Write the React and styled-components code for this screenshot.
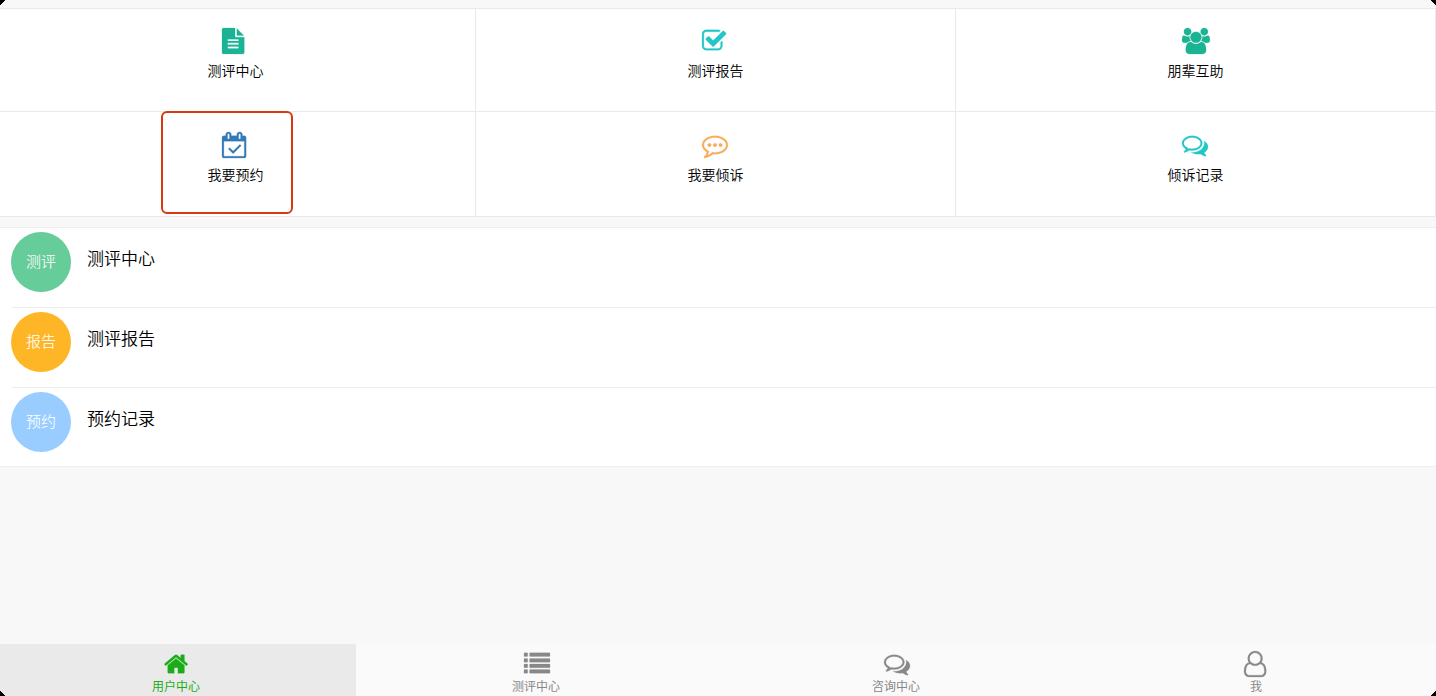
import React from "react";
import styled, { createGlobalStyle, css } from "styled-components";

const GlobalStyle = createGlobalStyle`
  body {
    margin: 0;
    background: #f8f8f8;
    color: #000;
    font-family: "Noto Sans CJK SC", sans-serif;
    font-weight: 350;
  }
  a {
    color: inherit;
    text-decoration: none;
  }
`;

const Page = styled.div`
  min-height: 100vh;
  margin-left: -4px;
  box-sizing: border-box;
  padding-top: 8px;
  display: flex;
  flex-direction: column;
`;

const Grid = styled.nav`
  position: relative;
  display: grid;
  grid-template-columns: repeat(3, 1fr);
  background: #fff;
  border-bottom: 1px solid #e9e9e9;
  &::before {
    content: "";
    position: absolute;
    top: 0;
    left: 0;
    right: 0;
    border-top: 1px solid #e9e9e9;
  }
`;

const GridCell = styled.a`
  position: relative;
  box-sizing: border-box;
  min-height: 104px;
  padding-top: 20px;
  display: flex;
  flex-direction: column;
  align-items: center;
  border-right: 1px solid #e9e9e9;
  &:nth-child(-n + 3) {
    border-bottom: 1px solid #e9e9e9;
  }
`;

const IconBox = styled.span`
  width: ${props => props.$width}px;
  height: 26px;
  color: ${props => props.$color};
  svg {
    display: block;
    height: 26px;
    overflow: visible;
    fill: currentColor;
    stroke: currentColor;
    stroke-width: 16px;
  }
`;

const GridLabel = styled.span`
  margin-top: 6px;
  font-size: 14px;
  line-height: 20px;
`;

const Highlight = styled.span`
  position: absolute;
  top: -1px;
  left: 165px;
  width: 132px;
  height: 103px;
  box-sizing: border-box;
  border: 2px solid #d9380f;
  border-radius: 6px;
`;

const List = styled.div`
  margin-top: 10px;
  background: #fff;
  border-top: 1px solid #efefef;
  border-bottom: 1px solid #efefef;
`;

const ListRow = styled.a`
  position: relative;
  display: flex;
  align-items: flex-start;
  gap: 16px;
  padding: 4px 15px 14px;
  & + & {
    padding-top: 6px;
    &::before {
      content: "";
      position: absolute;
      top: 1px;
      left: 16px;
      right: 0;
      border-top: 1px solid #efefef;
    }
  }
`;

const Badge = styled.span`
  width: 60px;
  height: 60px;
  border-radius: 50%;
  background: ${props => props.$color};
  color: rgba(255, 255, 255, 0.9);
  font-size: 15px;
  line-height: 58px;
  text-align: center;
`;

const ListTitle = styled.span`
  margin-top: 14px;
  font-size: 17px;
  line-height: 24px;
`;

const TabBar = styled.nav`
  margin-top: auto;
  display: grid;
  grid-template-columns: repeat(4, 1fr);
  background: #fafafa;
`;

const Tab = styled.a`
  padding: 7px 0 1px;
  display: flex;
  flex-direction: column;
  align-items: center;
  font-size: 12px;
  font-weight: 400;
  line-height: 18px;
  color: #888;
  ${props =>
    props.$active &&
    css`
      background: #eaeaea;
      color: #1aad19;
    `}
`;

const Corner = styled.svg`
  position: fixed;
  width: 5px;
  height: 5px;
  ${props => (props.$bottom ? "bottom: 0;" : "top: 0;")}
  ${props => (props.$right ? "right: 0;" : "left: 0;")}
  transform: scale(
    ${props => (props.$right ? -1 : 1)},
    ${props => (props.$bottom ? -1 : 1)}
  );
`;

// viewBox + path data, all on a 1792 unit em
const icons = {
  file: {
    box: "128 0 1536 1792",
    d:
      "M1596 476q14 14 28 36h-472v-472q22 14 36 28zm-476 164h544v1056q0 40-28 68t-68 28h-1344q-40 0-68-28t-28-68v-1600q0-40 28-68t68-28h800v544q0 40 28 68t68 28zm160 736v-64q0-14-9-23t-23-9h-704q-14 0-23 9t-9 23v64q0 14 9 23t23 9h704q14 0 23-9t9-23zm0-256v-64q0-14-9-23t-23-9h-704q-14 0-23 9t-9 23v64q0 14 9 23t23 9h704q14 0 23-9t9-23zm0-256v-64q0-14-9-23t-23-9h-704q-14 0-23 9t-9 23v64q0 14 9 23t23 9h704q14 0 23-9t9-23z"
  },
  check: {
    box: "64 0 1664 1792",
    d:
      "M1472 930v318q0 119-84.5 203.5t-203.5 84.5h-832q-119 0-203.5-84.5t-84.5-203.5v-832q0-119 84.5-203.5t203.5-84.5h832q63 0 117 25 15 7 18 23 3 17-9 29l-49 49q-10 10-23 10-3 0-9-2-23-6-45-6h-832q-66 0-113 47t-47 113v832q0 66 47 113t113 47h832q66 0 113-47t47-113v-254q0-13 9-22l64-64q10-10 23-10 6 0 12 3 20 8 20 29zm231-489l-814 814q-24 24-57 24t-57-24l-430-430q-24-24-24-57t24-57l110-110q24-24 57-24t57 24l263 263 647-647q24-24 57-24t57 24l110 110q24 24 24 57t-24 57z"
  },
  group: {
    box: "64 0 1920 1792",
    d:
      "M657 896q-162 5-265 128h-134q-82 0-138-40.5t-56-118.5q0-353 124-353 6 0 43.5 21t97.5 42.5 119 21.5q67 0 133-23-5 37-5 66 0 139 81 256zm1071 637q0 120-73 189.5t-194 69.5h-874q-121 0-194-69.5t-73-189.5q0-53 3.5-103.5t14-109 26.5-108.5 43-97.5 62-81 85.5-53.5 111.5-20q10 0 43 21.5t73 48 107 48 135 21.5 135-21.5 107-48 73-48 43-21.5q61 0 111.5 20t85.5 53.5 62 81 43 97.5 26.5 108.5 14 109 3.5 103.5zm-1024-1277q0 106-75 181t-181 75-181-75-75-181 75-181 181-75 181 75 75 181zm704 384q0 159-112.5 271.5t-271.5 112.5-271.5-112.5-112.5-271.5 112.5-271.5 271.5-112.5 271.5 112.5 112.5 271.5zm576 225q0 78-56 118.5t-138 40.5h-134q-103-123-265-128 81-117 81-256 0-29-5-66 66 23 133 23 59 0 119-21.5t97.5-42.5 43.5-21q124 0 124 353zm-128-609q0 106-75 181t-181 75-181-75-75-181 75-181 181-75 181 75 75 181z"
  },
  calendar: {
    box: "0 0 1664 1792",
    d:
      "M1303 964l-512 512q-10 9-23 9t-23-9l-288-288q-9-10-9-23t9-22l46-46q9-9 22-9t23 9l220 220 444-444q10-9 23-9t22 9l46 46q9 9 9 22t-9 23zm-1175 700h1408v-1024h-1408v1024zm384-1216v-288q0-14-9-23t-23-9h-64q-14 0-23 9t-9 23v288q0 14 9 23t23 9h64q14 0 23-9t9-23zm768 0v-288q0-14-9-23t-23-9h-64q-14 0-23 9t-9 23v288q0 14 9 23t23 9h64q14 0 23-9t9-23zm384-64v1280q0 52-38 90t-90 38h-1408q-52 0-90-38t-38-90v-1280q0-52 38-90t90-38h128v-96q0-66 47-113t113-47h64q66 0 113 47t47 113v96h384v-96q0-66 47-113t113-47h64q66 0 113 47t47 113v96h128q52 0 90 38t38 90z"
  },
  comment: {
    box: "0 0 1792 1792",
    d:
      "M640 896q0 53-37.5 90.5t-90.5 37.5-90.5-37.5-37.5-90.5 37.5-90.5 90.5-37.5 90.5 37.5 37.5 90.5zm384 0q0 53-37.5 90.5t-90.5 37.5-90.5-37.5-37.5-90.5 37.5-90.5 90.5-37.5 90.5 37.5 37.5 90.5zm384 0q0 53-37.5 90.5t-90.5 37.5-90.5-37.5-37.5-90.5 37.5-90.5 90.5-37.5 90.5 37.5 37.5 90.5zm-512-512q-204 0-381.5 69.5t-282 187.5-104.5 255q0 112 71.5 213.5t201.5 175.5l87 50-27 96q-24 91-70 172 152-63 275-171l43-38 57 6q69 8 130 8 204 0 381.5-69.5t282-187.5 104.5-255-104.5-255-282-187.5-381.5-69.5zm896 512q0 174-120 321.5t-326 233-450 85.5q-70 0-145-8-198 175-460 242-49 14-114 22h-5q-15 0-27-10.5t-16-27.5v-1q-3-4-.5-12t2-10 4.5-9.5l6-9 7-8.5 8-9q7-8 31-34.5t34.5-38 31-39.5 32.5-51 27-59 26-76q-157-89-247.5-220t-90.5-281q0-174 120-321.5t326-233 450-85.5 450 85.5 326 233 120 321.5z"
  },
  comments: {
    box: "0 0 1792 1792",
    d:
      "M704 384q-153 0-286 52t-211.5 141-78.5 191q0 82 53 158t149 132l97 56-35 84q34-20 62-39l44-31 53 10q78 14 153 14 153 0 286-52t211.5-141 78.5-191-78.5-191-211.5-141-286-52zm0-128q191 0 353.5 68.5t256.5 186.5 94 257-94 257-256.5 186.5-353.5 68.5q-86 0-176-16-124 88-278 128-36 9-86 16h-3q-11 0-20.5-8t-11.5-21q-1-3-1-6.5t.5-6.5 2-6l2.5-5 3.5-5.5 4-5 4.5-5 4-4.5q5-6 23-25t26-29.5 22.5-29 25-38.5 20.5-44q-124-72-195-177t-71-224q0-139 94-257t256.5-186.5 353.5-68.5zm822 1169q10 24 20.5 44t25 38.5 22.5 29 26 29.5 23 25q1 1 4 4.5t4.5 5 4 5 3.5 5.5l2.5 5 2 6 .5 6.5-1 6.5q-3 14-13 22t-22 7q-50-7-86-16-154-40-278-128-90 16-176 16-271 0-472-132 58 4 88 4 161 0 309-45t264-129q125-92 192-212t67-254q0-77-23-152 129 71 204 178t75 230q0 120-71 224.5t-195 176.5z"
  },
  home: {
    box: "64 0 1664 1792",
    d:
      "M1472 992v480q0 26-19 45t-45 19h-384v-384h-256v384h-384q-26 0-45-19t-19-45v-480q0-1 .5-3t.5-3l575-474 575 474q1 2 1 6zm223-69l-62 74q-8 9-21 11h-3q-13 0-21-7l-692-577-692 577q-12 8-24 7-13-2-21-11l-62-74q-8-10-7-23.5t11-21.5l719-599q32-26 76-26t76 26l244 204v-195q0-14 9-23t23-9h192q14 0 23 9t9 23v408l219 182q10 8 11 21.5t-7 23.5z"
  },
  list: {
    box: "0 0 1792 1792",
    d:
      "M32 128h192q32 0 32 32v192q0 32-32 32h-192q-32 0-32-32v-192q0-32 32-32zm384 0h1344q32 0 32 32v192q0 32-32 32h-1344q-32 0-32-32v-192q0-32 32-32zm-384 384h192q32 0 32 32v192q0 32-32 32h-192q-32 0-32-32v-192q0-32 32-32zm384 0h1344q32 0 32 32v192q0 32-32 32h-1344q-32 0-32-32v-192q0-32 32-32zm-384 384h192q32 0 32 32v192q0 32-32 32h-192q-32 0-32-32v-192q0-32 32-32zm384 0h1344q32 0 32 32v192q0 32-32 32h-1344q-32 0-32-32v-192q0-32 32-32zm-384 384h192q32 0 32 32v192q0 32-32 32h-192q-32 0-32-32v-192q0-32 32-32zm384 0h1344q32 0 32 32v192q0 32-32 32h-1344q-32 0-32-32v-192q0-32 32-32z"
  },
  user: {
    box: "0 0 1536 1792",
    d:
      "M1201 784q47 14 89.5 38t89 73 79.5 115.5 55 172 22 236.5q0 154-100 263.5t-241 109.5h-854q-141 0-241-109.5t-100-263.5q0-131 22-236.5t55-172 79.5-115.5 89-73 89.5-38q-79-125-79-272 0-104 40.5-198.5t109.5-163.5 163.5-109.5 198.5-40.5 198.5 40.5 163.5 109.5 109.5 163.5 40.5 198.5q0 147-79 272zm-433-656q-159 0-271.5 112.5t-112.5 271.5 112.5 271.5 271.5 112.5 271.5-112.5 112.5-271.5-112.5-271.5-271.5-112.5zm427 1536q88 0 150.5-71.5t62.5-173.5q0-239-78.5-377t-225.5-145q-145 127-336 127t-336-127q-147 7-225.5 145t-78.5 377q0 102 62.5 173.5t150.5 71.5h854z"
  }
};

const Icon = ({ name, color, width }) => (
  <IconBox $color={color} $width={width}>
    <svg viewBox={icons[name].box} aria-hidden="true">
      <path d={icons[name].d} />
    </svg>
  </IconBox>
);

const entries = [
  { icon: "file", color: "#1ab394", text: "测评中心" },
  { icon: "check", color: "#23c6c8", text: "测评报告" },
  { icon: "group", color: "#1ab394", text: "朋辈互助" },
  { icon: "calendar", color: "#337ab7", text: "我要预约", marked: true },
  { icon: "comment", color: "#f8ac59", text: "我要倾诉" },
  { icon: "comments", color: "#23c6c8", text: "倾诉记录" }
];

const rows = [
  { badge: "测评", color: "#66cc99", text: "测评中心" },
  { badge: "报告", color: "#ffb626", text: "测评报告" },
  { badge: "预约", color: "#99ccff", text: "预约记录" }
];

const tabs = [
  { icon: "home", text: "用户中心", active: true },
  { icon: "list", text: "测评中心" },
  { icon: "comments", text: "咨询中心" },
  { icon: "user", text: "我" }
];

const App = () => (
  <>
    <GlobalStyle />
    <Page>
      <Grid>
        {entries.map(({ icon, color, text, marked }) => (
          <GridCell href="#" key={text}>
            <Icon name={icon} color={color} width={28} />
            <GridLabel>{text}</GridLabel>
            {marked && <Highlight />}
          </GridCell>
        ))}
      </Grid>
      <List>
        {rows.map(({ badge, color, text }) => (
          <ListRow href="#" key={text}>
            <Badge $color={color}>{badge}</Badge>
            <ListTitle>{text}</ListTitle>
          </ListRow>
        ))}
      </List>
      <TabBar>
        {tabs.map(({ icon, text, active }) => (
          <Tab href="#" key={text} $active={active}>
            <Icon name={icon} width={24} />
            <span>{text}</span>
          </Tab>
        ))}
      </TabBar>
    </Page>
    {[[0, 0], [1, 0], [0, 1], [1, 1]].map(([right, bottom]) => (
      <Corner
        key={`${right}${bottom}`}
        $right={right}
        $bottom={bottom}
        viewBox="0 0 5 5"
        aria-hidden="true"
      >
        <path d="M0 0h5v1h-1v1h-1v1h-1v1h-1v1h-1z" />
      </Corner>
    ))}
  </>
);

export default App;
